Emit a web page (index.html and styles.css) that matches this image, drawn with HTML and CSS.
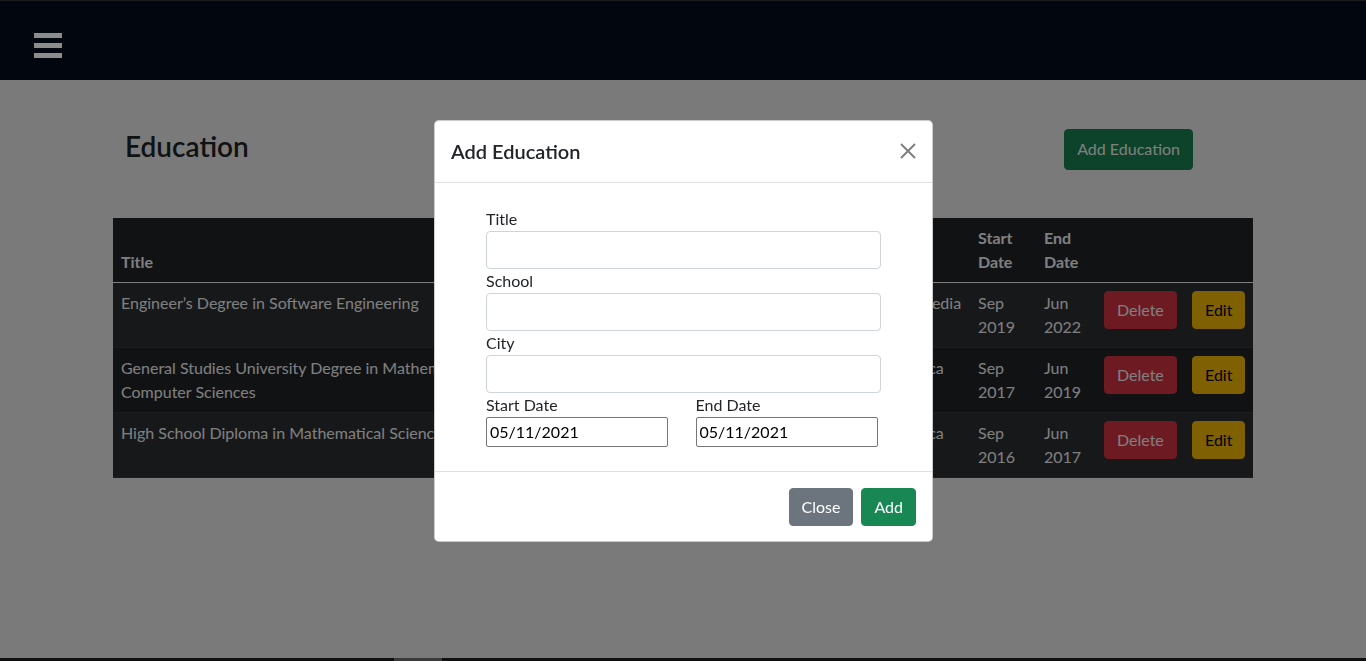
FILE: index.html
```html
<!DOCTYPE html>
<html lang="en">
<head>
<meta charset="utf-8">
<title>Education</title>
<link rel="stylesheet" href="styles.css">
</head>
<body>
<nav class="navbar">
  <button class="toggler" aria-label="Menu"><span></span><span></span><span></span></button>
</nav>

<main class="container">
  <div class="page-head">
    <h3 class="page-title">Education</h3>
    <button class="btn btn-success btn-add">Add Education</button>
  </div>

  <table class="table">
    <colgroup>
      <col class="c-title"><col class="c-school"><col class="c-city"><col class="c-start"><col class="c-end"><col class="c-del"><col class="c-edit">
    </colgroup>
    <thead>
      <tr><th>Title</th><th>School</th><th>City</th><th>Start Date</th><th>End Date</th><th></th><th></th></tr>
    </thead>
    <tbody>
      <tr class="striped">
        <td>Engineer’s Degree in Software Engineering</td>
        <td>ENSET Mohammedia</td>
        <td>Mohammedia</td>
        <td>Sep 2019</td>
        <td>Jun 2022</td>
        <td><button class="btn btn-danger">Delete</button></td>
        <td><button class="btn btn-warning">Edit</button></td>
      </tr>
      <tr>
        <td>General Studies University Degree in Mathematics and Computer Sciences</td>
        <td>Faculty of Sciences Ben M’Sik</td>
        <td>Casablanca</td>
        <td>Sep 2017</td>
        <td>Jun 2019</td>
        <td><button class="btn btn-danger">Delete</button></td>
        <td><button class="btn btn-warning">Edit</button></td>
      </tr>
      <tr class="striped">
        <td>High School Diploma in Mathematical Sciences</td>
        <td>Lycée Al Khawarizmi</td>
        <td>Casablanca</td>
        <td>Sep 2016</td>
        <td>Jun 2017</td>
        <td><button class="btn btn-danger">Delete</button></td>
        <td><button class="btn btn-warning">Edit</button></td>
      </tr>
    </tbody>
  </table>
</main>

<div class="backdrop"></div>

<div class="modal">
  <div class="modal-content">
    <div class="modal-header">
      <div class="modal-title">Add Education</div>
      <button class="btn-close" aria-label="Close">
        <svg viewBox="0 0 16 16" width="16" height="16"><path d="M1 1L15 15M15 1L1 15" stroke="currentColor" stroke-width="2" fill="none"/></svg>
      </button>
    </div>
    <div class="modal-body">
      <form class="edu-form">
        <label class="form-label">Title</label>
        <input class="form-control" type="text">
        <label class="form-label">School</label>
        <input class="form-control" type="text">
        <label class="form-label">City</label>
        <input class="form-control" type="text">
        <div class="date-row">
          <div class="date-col">
            <label class="form-label">Start Date</label>
            <input class="date-input" type="text" value="05/11/2021">
          </div>
          <div class="date-col">
            <label class="form-label">End Date</label>
            <input class="date-input" type="text" value="05/11/2021">
          </div>
        </div>
      </form>
    </div>
    <div class="modal-footer">
      <button class="btn btn-secondary">Close</button>
      <button class="btn btn-success">Add</button>
    </div>
  </div>
</div>

<div class="hscroll"><div class="hscroll-thumb"></div></div>
</body>
</html>
```
FILE: styles.css
```css
* { box-sizing: border-box; }
html, body { margin: 0; height: 100%; }
body {
  font-family: Lato, "Noto Sans", sans-serif;
  font-size: 16px;
  line-height: 1.5;
  color: #212529;
  background: #f5f5f5;
  overflow: hidden;
}
button, input { font-family: inherit; font-size: 16px; }

/* navbar */
.navbar {
  position: relative;
  z-index: 1060;
  height: 80px;
  background: #02060f;
  border-top: 1px solid #1c1c1c;
  padding: 32px 0 0 34px;
}
.toggler {
  display: flex;
  flex-direction: column;
  gap: 5px;
  padding: 0;
  border: 0;
  background: none;
}
.toggler span {
  display: block;
  width: 28px;
  height: 5px;
  background: #8c8c8c;
}

/* page */
.container { width: 1140px; margin: 0 auto; }
.page-head {
  display: flex;
  align-items: center;
  margin-top: 48px;
  height: 42px;
}
.page-title {
  margin: 0 0 4px;
  padding-left: 12px;
  font-size: 28px;
  font-weight: 600;
  line-height: 1.2;
}
.btn {
  display: inline-block;
  border: 1px solid transparent;
  border-radius: 4px;
  padding: 6px 12px;
  line-height: 24px;
  color: #fff;
  cursor: pointer;
}
.btn-add { margin-left: auto; margin-right: 60px; padding: 7px 12px 8px; }
.btn-success { background: #198754; border-color: #198754; }
.btn-secondary { background: #6c757d; border-color: #6c757d; }
.btn-danger { background: #dc3545; border-color: #dc3545; }
.btn-warning { background: #ffc107; border-color: #ffc107; color: #000; }

/* table */
.table {
  width: 1140px;
  margin-top: 48px;
  border-collapse: collapse;
  table-layout: fixed;
  background: #212529;
  color: #fff;
}
.c-title { width: 420px; }
.c-school { width: 324px; }
.c-city { width: 113px; }
.c-start { width: 66px; }
.c-end { width: 60px; }
.c-del { width: 88px; }
.c-edit { width: 69px; }
.table th, .table td {
  padding: 8px;
  text-align: left;
  border-bottom: 1px solid #373b3e;
}
.table th { font-weight: 700; vertical-align: bottom; border-bottom-color: #fff; }
.table td { vertical-align: top; }
.table tr.striped td { background: rgba(255, 255, 255, 0.05); }

/* backdrop & modal */
.backdrop {
  position: fixed;
  inset: 0;
  background: rgba(0, 0, 0, 0.5);
  z-index: 1040;
}
.modal {
  position: fixed;
  inset: 0;
  z-index: 1050;
  display: flex;
  align-items: center;
  justify-content: center;
  padding-left: 1px;
}
.modal-content {
  width: 499px;
  background: #fff;
  border: 1px solid rgba(0, 0, 0, 0.2);
  border-radius: 5px;
}
.modal-header {
  display: flex;
  align-items: center;
  padding: 15px 16px 16px;
  border-bottom: 1px solid #dee2e6;
}
.modal-title { font-size: 20px; font-weight: 600; line-height: 1.5; }
.btn-close {
  margin-left: auto;
  width: 16px;
  height: 16px;
  padding: 0;
  border: 0;
  background: none;
  color: #000;
  opacity: 0.5;
  display: flex;
}
.modal-body { padding: 16px; }
.edu-form { padding: 8px 35px; display: flex; flex-direction: column; }
.form-label { display: block; line-height: 24px; }
.form-control {
  display: block;
  width: 100%;
  height: 38px;
  padding: 6px 12px;
  border: 1px solid #ced4da;
  border-radius: 4px;
  color: #212529;
  background: #fff;
}
.date-row { display: grid; grid-template-columns: 1fr 1fr; column-gap: 24px; }
.date-input {
  display: block;
  width: 182px;
  height: 30px;
  padding: 1px 3px;
  border: 1px solid #767676;
  border-radius: 2px;
  color: #000;
  background: #fff;
}
.modal-footer {
  display: flex;
  justify-content: flex-end;
  padding: 12px 12px 11px;
  border-top: 1px solid #dee2e6;
}
.modal-footer .btn { margin: 4px; }

/* bottom scrollbar strip */
.hscroll {
  position: fixed;
  left: 0;
  right: 0;
  bottom: 0;
  height: 3px;
  background: #111;
  z-index: 1070;
}
.hscroll-thumb {
  margin-left: 394px;
  width: 48px;
  height: 3px;
  background: #3a3a3a;
}
```
